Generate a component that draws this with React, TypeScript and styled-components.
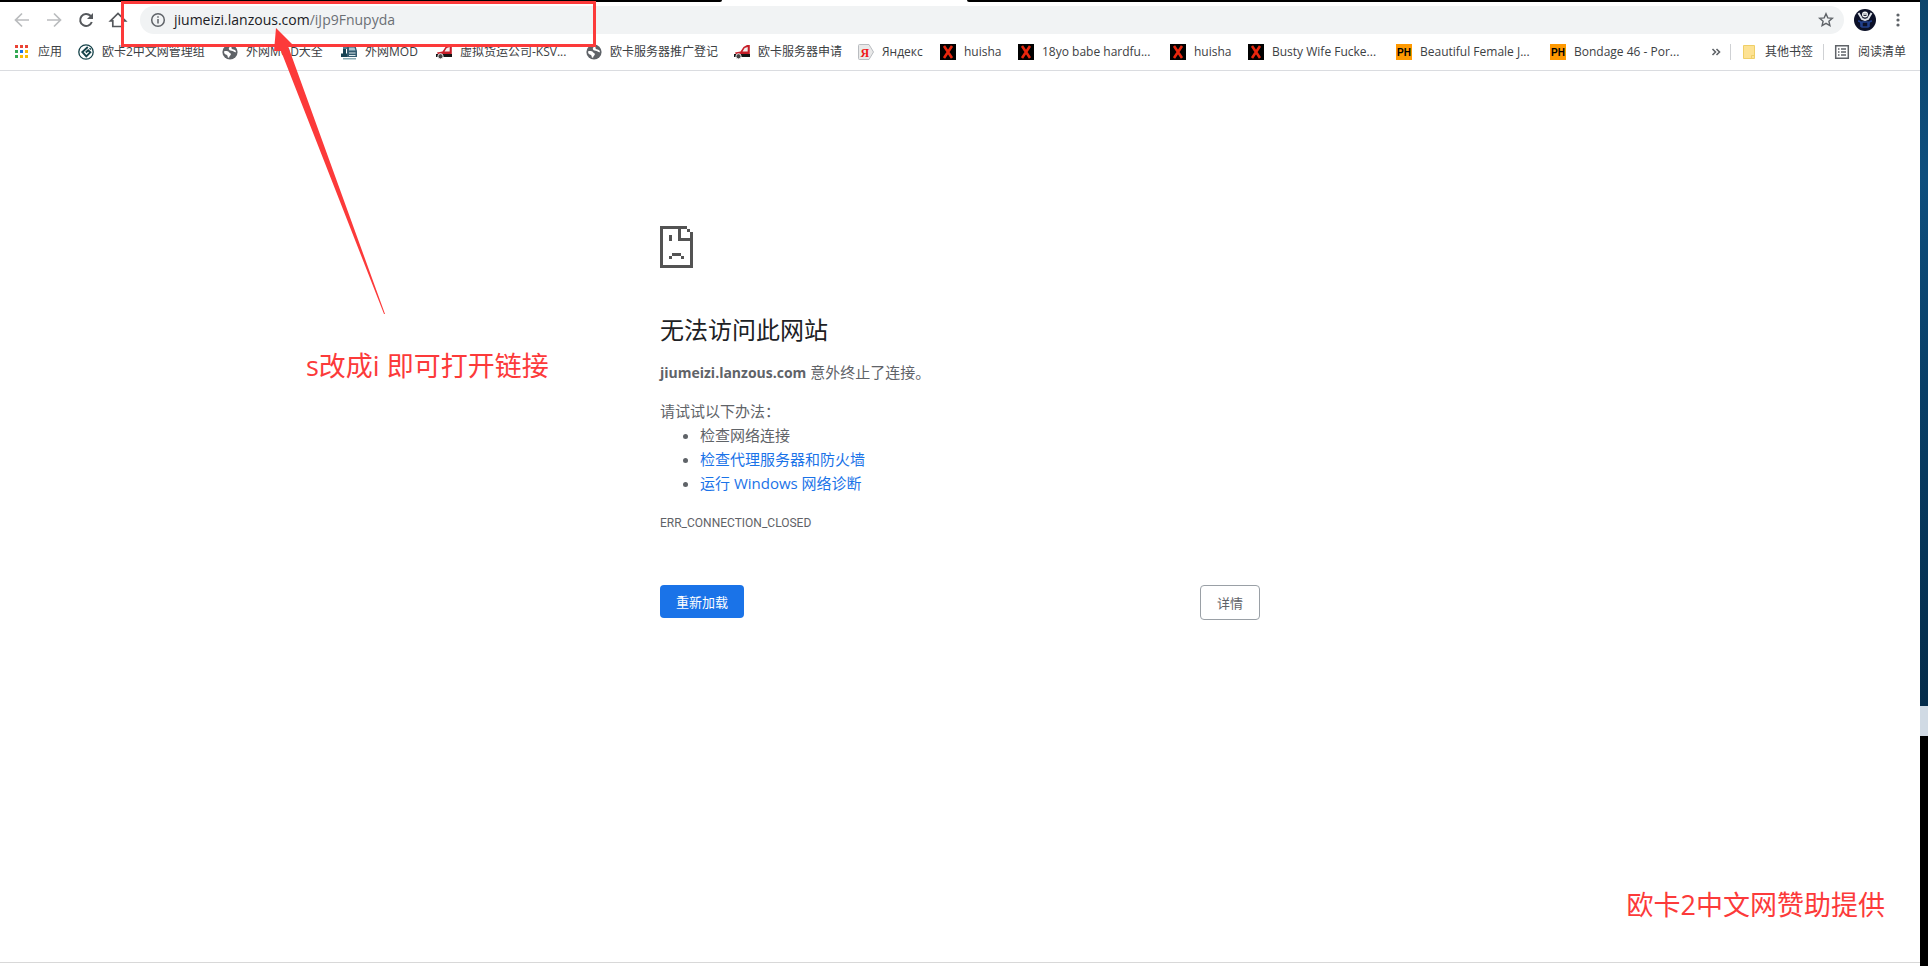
import React from "react";
import styled, { createGlobalStyle } from "styled-components";

const uiFont = `"Open Sans", "Noto Sans CJK SC", sans-serif`;
const red = "#fc3a3a";

const GlobalStyle = createGlobalStyle`
  * { box-sizing: border-box; }
  html, body, #root { height: 100%; }
  body { margin: 0; background: #fff; font-family: ${uiFont}; overflow: hidden; }
`;

const Screen = styled.div`
  position: relative;
  display: flex;
  min-height: 100vh;
`;

const BrowserWindow = styled.div`
  flex: 1;
  min-width: 0;
  display: flex;
  flex-direction: column;
`;

const Desktop = styled.div`
  flex: none;
  width: 8px;
  display: flex;
  flex-direction: column;
  background: #000;
`;

const Wallpaper = styled.div`
  flex: 706 0 0;
  background: linear-gradient(#0d456c, #0e4f7e 25%, #083f67 55%, #042c4a);
`;

const Taskbar = styled.div`
  flex: 30 0 0;
  background: #d0dae4;
`;

const DesktopVoid = styled.div`
  flex: 230 0 0;
`;

const TabStrip = styled.div`
  flex: none;
  height: 2px;
  display: flex;
  background: #fff;
`;

const TabGap = styled.div<{ $grow: number; $corner: string }>`
  flex: ${(p) => p.$grow} 0 0;
  background: #000;
  border-radius: ${(p) => p.$corner};
`;

const ActiveTab = styled.div`
  flex: 245 0 0;
`;

const Toolbar = styled.header`
  flex: none;
  height: 34px;
  padding: 4px 12px 2px;
  display: flex;
  align-items: center;
`;

const NavButton = styled.button<{ $muted?: boolean }>`
  width: 20px;
  height: 20px;
  margin-right: 12px;
  padding: 0;
  border: 0;
  background: none;
  color: ${(p) => (p.$muted ? "#babcbe" : "#55585c")};
  svg { display: block; }
`;

const Omnibox = styled.div`
  flex: 1;
  position: relative;
  height: 28px;
  padding: 0 8px 0 10px;
  display: flex;
  align-items: center;
  gap: 8px;
  border-radius: 14px;
  background: #f1f3f4;
  color: #5f6368;
`;

const Address = styled.a`
  flex: 1;
  color: #6b6f74;
  font-size: 14px;
  line-height: 20px;
  text-decoration: none;
  strong { color: #202124; font-weight: 400; }
`;

const IconButton = styled.button`
  flex: none;
  padding: 0;
  border: 0;
  background: none;
  color: #5f6368;
  svg { display: block; }
`;

const ProfileButton = styled(IconButton)`
  margin: 0 12px 0 10px;
`;

const BookmarkBar = styled.nav`
  flex: none;
  height: 35px;
  padding: 0 14px 2px;
  display: flex;
  align-items: center;
  border-bottom: 1px solid #dadce0;
`;

const Bookmark = styled.a<{ $width: number }>`
  flex: none;
  width: ${(p) => p.$width}px;
  height: 20px;
  display: flex;
  align-items: center;
  gap: 8px;
  color: #3c4043;
  font-size: 12px;
  line-height: 20px;
  white-space: nowrap;
  text-decoration: none;
  svg { flex: none; }
`;

const BarSpacer = styled.div`
  flex: 1;
`;

const More = styled(IconButton)`
  margin-right: 9px;
`;

const Divider = styled.span`
  flex: none;
  width: 1px;
  height: 16px;
  margin-right: 10px;
  background: #cfd1d4;
`;

const Page = styled.main`
  flex: 1;
  border-bottom: 1px solid #d8d8d8;
  margin-bottom: 3px;
  padding-top: 155px;
`;

const ErrorPanel = styled.section`
  width: 600px;
  margin: 0 auto;
  color: #5f6368;
  font-size: 15px;
  line-height: 24px;
  svg { display: block; }
  p { margin: 0; }
`;

const Title = styled.h1`
  margin: 43px 0 11px;
  color: #202124;
  font-size: 24px;
  font-weight: 400;
  line-height: 38px;
`;

const Host = styled.strong`
  font-size: 14px;
  font-weight: 700;
`;

const Advice = styled.div`
  margin-top: 14px;
  ul { margin: 0; padding-left: 40px; }
  a { color: #1a73e8; text-decoration: none; }
`;

const ErrorCode = styled.div`
  margin-top: 16px;
  font-family: Roboto, sans-serif;
  font-size: 12px;
  line-height: 24px;
`;

const Actions = styled.div`
  margin-top: 50px;
  display: flex;
  align-items: flex-start;
  justify-content: space-between;
`;

const ActionButton = styled.button<{ $primary?: boolean }>`
  height: ${(p) => (p.$primary ? 33 : 35)}px;
  padding: 0 16px;
  border: ${(p) => (p.$primary ? "0" : "1px solid #9aa0a6")};
  border-radius: 4px;
  background: ${(p) => (p.$primary ? "#1a73e8" : "#fff")};
  color: ${(p) => (p.$primary ? "#fff" : "#5f6368")};
  font: 400 13px/20px ${uiFont};
`;

const Highlight = styled.div`
  position: absolute;
  left: 121px;
  top: 1px;
  width: 475px;
  height: 46px;
  border: 3px solid ${red};
`;

const Arrow = styled.svg`
  position: absolute;
  left: 273px;
  top: 28px;
`;

const Note = styled.p<{ $left?: string; $right?: string; $top: string }>`
  position: absolute;
  left: ${(p) => p.$left ?? "auto"};
  right: ${(p) => p.$right ?? "auto"};
  top: ${(p) => p.$top};
  margin: 0;
  color: ${red};
  font-size: 27px;
  line-height: 36px;
  white-space: nowrap;
`;

type IconName = "apps" | "spiral" | "globe" | "truck" | "redTruck" | "yandex" | "x" | "ph" | "folder" | "list";

const BookmarkIcon = ({ name }: { name: IconName }) => (
  <svg width="16" height="16" viewBox="0 0 16 16" aria-hidden="true">
    {name === "apps" &&
      ["#ea4335", "#ea4335", "#ea4335", "#34a853", "#1a73e8", "#fbbc04", "#34a853", "#fbbc04", "#fbbc04"].map((c, i) => (
        <rect key={i} x={1 + (i % 3) * 5} y={1 + Math.floor(i / 3) * 5} width="3" height="3" fill={c} />
      ))}
    {name === "spiral" && (
      <g fill="none" stroke="#16434a">
        <circle cx="8" cy="8" r="7.200" strokeWidth="1.300" />
        <path d="M9.800 3 4.300 8l4 4.300 4-4-2.100-2L7.800 8.500" strokeWidth="1.900" />
        <path d="m11.500 4.200 1.500 1.300" strokeWidth="1.500" />
      </g>
    )}
    {name === "globe" && (
      <>
        <circle cx="8" cy="8" r="7.600" fill="#5f6368" />
        <path d="M9.500 2.200C7.500 2.500 6.300 4 7 5.600c.6 1.200 2.400.9 3.600 1.500 1.200.5 1.800 1.400 3.400 1.100-.2-2.600-2-2.500-3.200-2.900C9.500 4.900 9.300 3.500 9.500 2.200zM2 7.400c1.500-.5 4-.5 5 .8.6.9 2 .8 1.900 2-.1 1.300-1.600 1.300-1.800 3.600l-1.300-.3C5.700 11.600 5.300 11 4 10.500 2.700 10 2 9 2 7.400z" fill="#fff" />
      </>
    )}
    {name === "truck" && (
      <>
        <path d="M2 1h5v4H2z" fill="#4f7c8d" />
        <path d="M6 2h8.500L16 7v6H6z" fill="#335c70" />
        <path d="M8 3.500h5.500l1 3H8z" fill="#a8c6d1" />
        <path d="M8 8.500h6.500v1H8zM8 11h6.500v1H8z" fill="#dce8ea" />
        <path d="M2 5h3v5H2zM0 9.500h6V13H0z" fill="#174252" />
        <path d="M2 14h13v1.500H2z" fill="#8aacb4" />
      </>
    )}
    {name === "redTruck" && (
      <>
        <path d="M15.800 1v9.500H2L1 8.500 6.500 7.500 9.500 3 13 1z" fill="#c61e28" />
        <path d="M13.700 3v4.500H8.500l2.200-3.400z" fill="#f3f0ef" />
        <path d="M0 10h16v3H0z" fill="#161616" />
        <circle cx="4.500" cy="12.300" r="2.600" fill="#444" stroke="#eee" strokeWidth="1" />
      </>
    )}
    {name === "yandex" && (
      <>
        <path d="M1.500.5h9.500L15.500 8 11 15.500H1.500a1 1 0 0 1-1-1v-13a1 1 0 0 1 1-1z" fill="#e9e9e9" stroke="#b9bcc0" />
        <text x="2.500" y="12.500" fill="#f01818" fontFamily="Liberation Serif" fontWeight="700" fontSize="12">Я</text>
      </>
    )}
    {name === "x" && (
      <>
        <path d="M0 0h16v16H0z" fill="#000" />
        <path d="m4 2 8 12M12 2 4 14" stroke="#e7260d" strokeWidth="2.600" />
      </>
    )}
    {name === "ph" && (
      <>
        <path d="M0 0h16v16H0z" fill="#ff9900" />
        <text x="8" y="11.500" textAnchor="middle" fontFamily="Liberation Sans" fontWeight="700" fontSize="10">PH</text>
      </>
    )}
    {name === "folder" && (
      <path d="M2.500 1.500h11v13h-11zM10.500 14.500v-3h3" fill="#fde293" stroke="#efcf67" />
    )}
    {name === "list" && (
      <g fill="none" stroke="#5f6368" strokeWidth="1.500">
        <path d="M1.700 1.700h12.600v12.600H1.700z" />
        <path d="M4 5h1.500M7 5h5M4 8h1.500M7 8h5M4 11h1.500M7 11h5" />
      </g>
    )}
  </svg>
);

const bookmarks: { icon: IconName; label: string; width: number }[] = [
  { icon: "apps", label: "应用", width: 64 },
  { icon: "spiral", label: "欧卡2中文网管理组", width: 144 },
  { icon: "globe", label: "外网MOD大全", width: 119 },
  { icon: "truck", label: "外网MOD", width: 95 },
  { icon: "redTruck", label: "虚拟货运公司-KSV...", width: 150 },
  { icon: "globe", label: "欧卡服务器推广登记", width: 148 },
  { icon: "redTruck", label: "欧卡服务器申请", width: 124 },
  { icon: "yandex", label: "Яндекс", width: 82 },
  { icon: "x", label: "huisha", width: 78 },
  { icon: "x", label: "18yo babe hardfu...", width: 152 },
  { icon: "x", label: "huisha", width: 78 },
  { icon: "x", label: "Busty Wife Fucke...", width: 148 },
  { icon: "ph", label: "Beautiful Female J...", width: 154 },
  { icon: "ph", label: "Bondage 46 - Por...", width: 140 },
];

export default function App() {
  return (
    <>
      <GlobalStyle />
      <Screen>
        <BrowserWindow>
          <TabStrip>
            <TabGap $grow={722} $corner="0 0 2px 0" />
            <ActiveTab />
            <TabGap $grow={953} $corner="0 0 0 2px" />
          </TabStrip>
          <Toolbar>
            <NavButton $muted aria-label="后退">
              <svg width="20" height="20" viewBox="0 0 20 20" fill="none" stroke="currentColor" strokeWidth="1.700">
                <path d="M17 10H4M10 3.500 3.500 10l6.500 6.500" />
              </svg>
            </NavButton>
            <NavButton $muted aria-label="前进">
              <svg width="20" height="20" viewBox="0 0 20 20" fill="none" stroke="currentColor" strokeWidth="1.700">
                <path d="M3 10h13M10 3.500l6.500 6.500-6.500 6.500" />
              </svg>
            </NavButton>
            <NavButton aria-label="重新加载">
              <svg width="20" height="20" viewBox="0 0 20 20" fill="none" stroke="currentColor" strokeWidth="2">
                <path d="M15.800 12a6 6 0 1 1-1.300-6.200L16 7.500" />
                <path d="M17 3v6h-6z" fill="currentColor" stroke="none" />
              </svg>
            </NavButton>
            <NavButton aria-label="主页">
              <svg width="20" height="20" viewBox="0 0 20 20" fill="none" stroke="currentColor" strokeWidth="1.700">
                <path d="M2.500 10.800 10 3.500l7.500 7.300h-2.300v5.700H4.800v-5.700z" />
              </svg>
            </NavButton>
            <Omnibox>
              <IconButton aria-label="网站信息">
                <svg width="16" height="16" viewBox="0 0 16 16" fill="none" stroke="currentColor" strokeWidth="1.500">
                  <circle cx="8" cy="8" r="6.300" />
                  <path d="M8 7v4.500M8 4.300v1.500" />
                </svg>
              </IconButton>
              <Address href="#">
                <strong>jiumeizi.lanzous.com</strong>/iJp9Fnupyda
              </Address>
              <IconButton aria-label="收藏">
                <svg width="20" height="20" viewBox="0 0 20 20" fill="none" stroke="currentColor" strokeWidth="1.400">
                  <path d="m10 3.800 1.800 4.100 4.500.4-3.400 2.900 1 4.400-3.900-2.300-3.900 2.300 1-4.400-3.400-2.900 4.500-.4z" />
                </svg>
              </IconButton>
            </Omnibox>
            <ProfileButton aria-label="个人资料">
              <svg width="22" height="22" viewBox="0 0 22 22">
                <circle cx="11" cy="11" r="11" fill="#0c1128" />
                <path d="M4 12c2 0 3 1 3 3v3M18 12c-2 0-3 1-3 3v3M8 13h6v5H8z" fill="none" stroke="#203f8c" strokeWidth="1.500" />
                <path d="M4.500 4 8 10l3 1 3-1 3.500-6" fill="none" stroke="#dfe3e8" strokeWidth="2" />
                <circle cx="11" cy="5.500" r="3" fill="#f1f3f4" />
                <path d="M9.500 5h1M11.500 5h1M9.500 6.500h3" stroke="#23283c" />
              </svg>
            </ProfileButton>
            <IconButton aria-label="菜单">
              <svg width="20" height="20" viewBox="0 0 20 20" fill="currentColor">
                <circle cx="10" cy="5" r="1.600" />
                <circle cx="10" cy="10" r="1.600" />
                <circle cx="10" cy="15" r="1.600" />
              </svg>
            </IconButton>
          </Toolbar>
          <BookmarkBar>
            {bookmarks.map((b, i) => (
              <Bookmark key={i} href="#" $width={b.width}>
                <BookmarkIcon name={b.icon} />
                {b.label}
              </Bookmark>
            ))}
            <BarSpacer />
            <More aria-label="更多书签">
              <svg width="10" height="10" viewBox="0 0 10 10" fill="none" stroke="currentColor" strokeWidth="1.600">
                <path d="m1.500 2 3 3-3 3M5.500 2l3 3-3 3" />
              </svg>
            </More>
            <Divider />
            <Bookmark href="#" $width={82}>
              <BookmarkIcon name="folder" />
              其他书签
            </Bookmark>
            <Divider />
            <Bookmark href="#" $width={72}>
              <BookmarkIcon name="list" />
              阅读清单
            </Bookmark>
          </BookmarkBar>
          <Page>
            <ErrorPanel>
              <svg width="33" height="42" viewBox="0 0 11 14" fill="#535353" shapeRendering="crispEdges" aria-hidden="true">
                <path d="M0 0h9v1H1v12h9V5H6V1h1v3h3V2h1v12H0zM9 1h1v1H9zM3 3h1v2H3zM4 9h3v1H4zM3 10h1v1H3zM7 10h1v1H7z" />
              </svg>
              <Title>无法访问此网站</Title>
              <p>
                <Host>jiumeizi.lanzous.com</Host> 意外终止了连接。
              </p>
              <Advice>
                <p>请试试以下办法：</p>
                <ul>
                  <li>检查网络连接</li>
                  <li><a href="#">检查代理服务器和防火墙</a></li>
                  <li><a href="#">运行 Windows 网络诊断</a></li>
                </ul>
              </Advice>
              <ErrorCode>ERR_CONNECTION_CLOSED</ErrorCode>
              <Actions>
                <ActionButton $primary>重新加载</ActionButton>
                <ActionButton>详情</ActionButton>
              </Actions>
            </ErrorPanel>
          </Page>
        </BrowserWindow>
        <Desktop>
          <Wallpaper />
          <Taskbar />
          <DesktopVoid />
        </Desktop>
        <Highlight />
        <Arrow width="114" height="288" viewBox="0 0 114 288" fill={red} aria-hidden="true">
          <path d="M3 0 20 17 15 18 112 286 111 286 8 23 1 23z" />
        </Arrow>
        <Note $left="306px" $top="348px">s改成i 即可打开链接</Note>
        <Note $right="43px" $top="887px">欧卡2中文网赞助提供</Note>
      </Screen>
    </>
  );
}
